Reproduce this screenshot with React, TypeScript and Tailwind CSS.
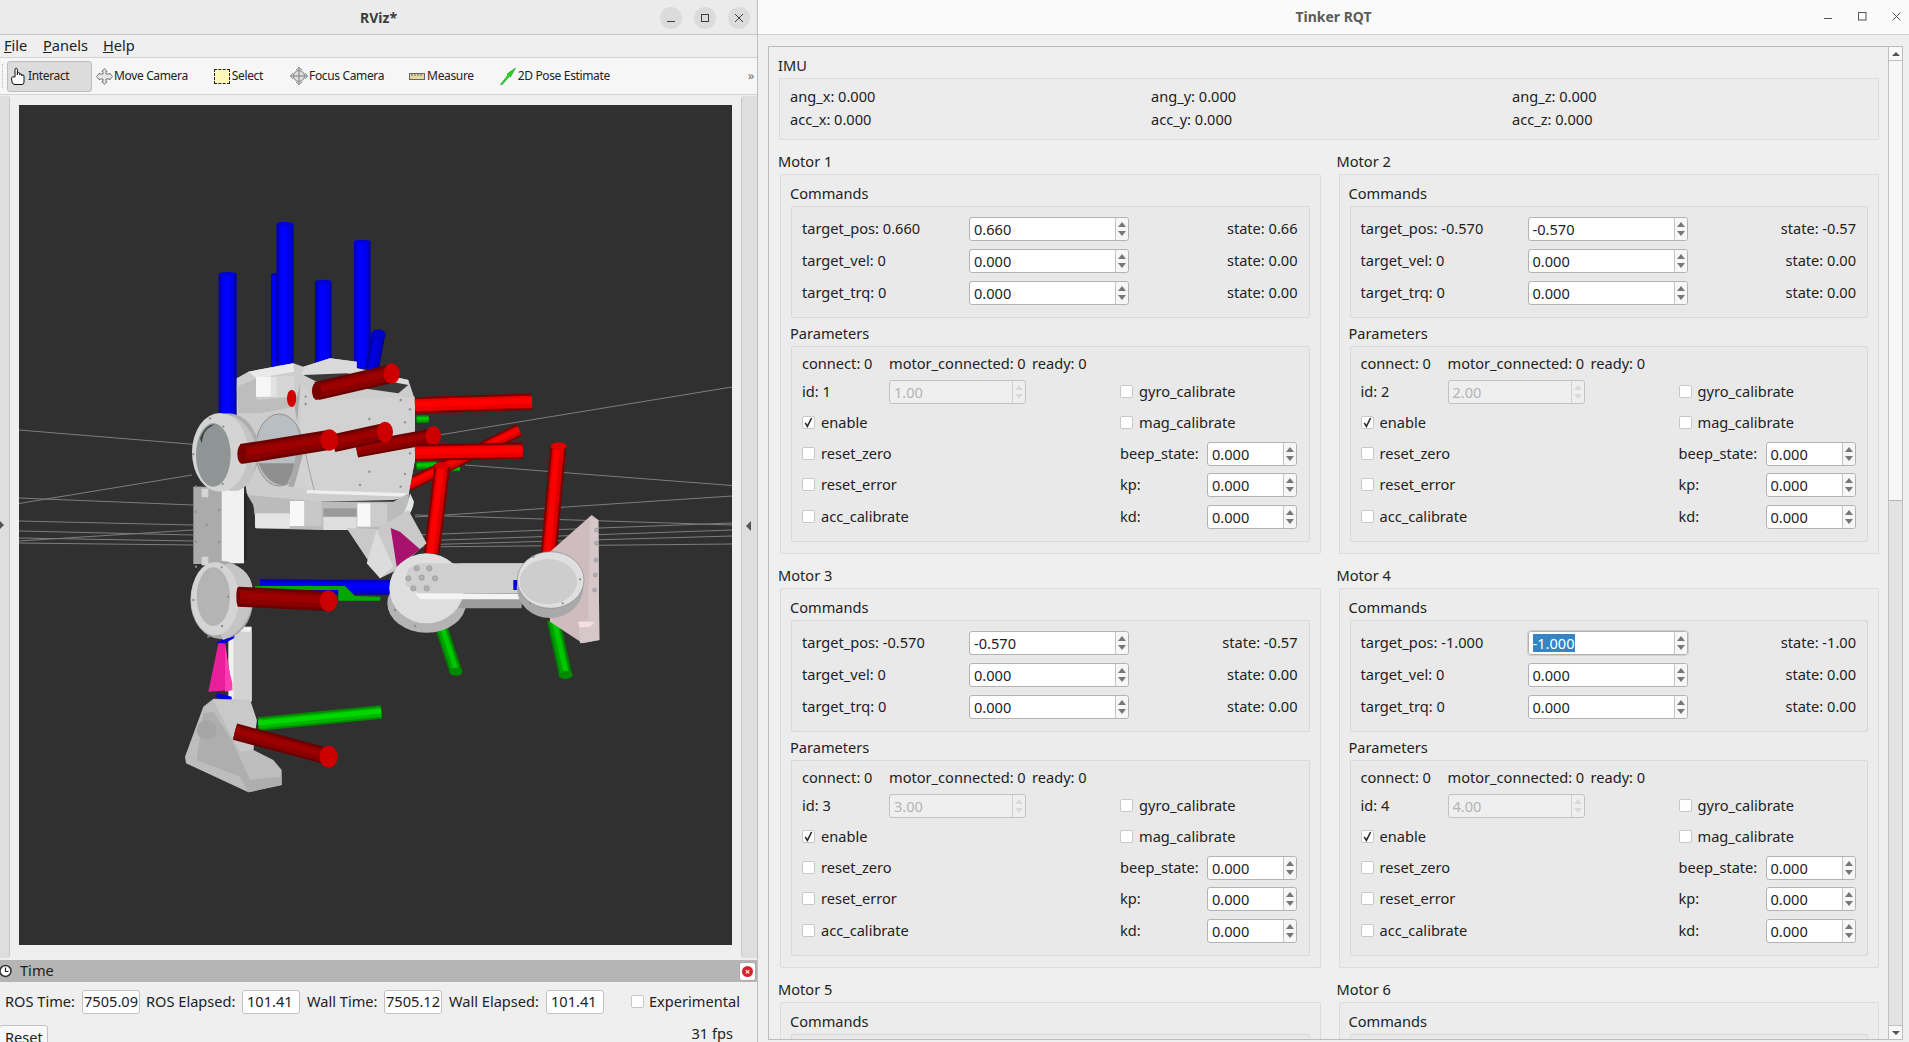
import React from "react";

const F = { fontFamily: '"Noto Sans", sans-serif' };

function Spin({ value, w, disabled, selected }: { value: string; w: string; disabled?: boolean; selected?: boolean }) {
  return (
    <div className={`${w} flex h-[24px] shrink-0 rounded-[3px] border ${disabled ? "border-[#c2c2c2] bg-[#efefef] text-[#b4b4b4]" : "border-[#b3b3b3] bg-white text-[#222]"} ${selected ? "outline outline-1 outline-[#cfcfcf]" : ""}`}>
      <div className="flex min-w-0 flex-1 items-center pl-[4px] leading-[18px]">
        {selected ? <span className="bg-[#3584c5] text-white">{value}</span> : <span>{value}</span>}
      </div>
      <div className={`flex w-[13px] shrink-0 flex-col items-center justify-center gap-[4px] border-l ${disabled ? "border-[#d2d2d2]" : "border-[#c4c4c4] bg-[#f6f6f6]"} rounded-r-[3px]`}>
        <div className={`h-0 w-0 border-x-[4px] border-b-[5px] border-x-transparent ${disabled ? "border-b-[#dadada]" : "border-b-[#777]"}`} />
        <div className={`h-0 w-0 border-x-[4px] border-t-[5px] border-x-transparent ${disabled ? "border-t-[#dadada]" : "border-t-[#777]"}`} />
      </div>
    </div>
  );
}

function Check({ label, checked }: { label: string; checked?: boolean }) {
  return (
    <div className="flex items-center">
      <div className="flex h-[13px] w-[13px] items-center justify-center rounded-[2px] border border-[#c8c8c8] bg-white">
        {checked && (
          <svg width="9" height="11" viewBox="0 0 9 11">
            <path d="M1.2 5.8 L3.4 9.4 L7.6 1" fill="none" stroke="#2a2a2a" strokeWidth="1.6" />
          </svg>
        )}
      </div>
      <span className="ml-[6px]">{label}</span>
    </div>
  );
}

function Motor({ n, pos, posLabel, state, focused }: { n: number; pos: string; posLabel: string; state: string; focused?: boolean }) {
  const cmds: [string, string, string, boolean][] = [
    [`target_pos: ${posLabel}`, pos, state, !!focused],
    ["target_vel: 0", "0.000", "0.00", false],
    ["target_trq: 0", "0.000", "0.00", false],
  ];
  const rowR = (l: string) => (
    <div className="flex items-center">
      <span className="w-[87px] shrink-0">{l}</span>
      <Spin value="0.000" w="w-[90px]" />
    </div>
  );
  return (
    <div>
      <div className="ml-[-1px] h-[34px] pt-[12px] leading-[18px]">{`Motor ${n}`}</div>
      <div className="ml-[1px] h-[380px] rounded-[2px] border border-[#dcdcdc] bg-[#ececec] px-[10px]">
        <div className="ml-[-1px] h-[31px] pt-[9px] leading-[18px]">Commands</div>
        <div className="h-[112px] rounded-[2px] border border-[#d9d9d9] bg-[#e9e9e9] px-[10px] pt-[6px]">
          {cmds.map(([l, v, s, f]) => (
            <div key={l} className="grid h-[32px] grid-cols-[167px_160px_1fr] items-center">
              <span>{l}</span>
              <Spin value={v} w="w-[160px]" selected={f} />
              <span className="pr-[1px] text-right">{`state: ${s}`}</span>
            </div>
          ))}
        </div>
        <div className="ml-[-1px] h-[28px] pt-[6px] leading-[18px]">Parameters</div>
        <div className="h-[196px] rounded-[2px] border border-[#d9d9d9] bg-[#e9e9e9] px-[10px] pt-[5px]">
          <div className="flex h-[24px] items-center">
            <span className="w-[87px]">connect: 0</span>
            <span className="w-[143px]">motor_connected: 0</span>
            <span>ready: 0</span>
          </div>
          <div className="grid h-[31px] grid-cols-[318px_1fr] items-center">
            <div className="flex items-center">
              <span className="w-[87px]">{`id: ${n}`}</span>
              <Spin value={`${n}.00`} w="w-[137px]" disabled />
            </div>
            <Check label="gyro_calibrate" />
          </div>
          <div className="grid h-[31px] grid-cols-[318px_1fr] items-center">
            <Check label="enable" checked />
            <Check label="mag_calibrate" />
          </div>
          <div className="grid h-[31px] grid-cols-[318px_1fr] items-center">
            <Check label="reset_zero" />
            {rowR("beep_state:")}
          </div>
          <div className="grid h-[32px] grid-cols-[318px_1fr] items-center">
            <Check label="reset_error" />
            {rowR("kp:")}
          </div>
          <div className="grid h-[32px] grid-cols-[318px_1fr] items-center">
            <Check label="acc_calibrate" />
            {rowR("kd:")}
          </div>
        </div>
      </div>
    </div>
  );
}

function Cyl({ a, b, w, c, cap, capR }: { a: [number, number]; b: [number, number]; w: number; c: [string, string, string]; cap?: string; capR?: [number, number] }) {
  const dx = b[0] - a[0];
  const dy = b[1] - a[1];
  const len = Math.hypot(dx, dy);
  const nx = -dy / len;
  const ny = dx / len;
  const L = (t: number, sw: number, col: string, k: string) => (
    <line key={k} x1={a[0] + nx * t} y1={a[1] + ny * t} x2={b[0] + nx * t} y2={b[1] + ny * t} stroke={col} strokeWidth={sw} />
  );
  return (
    <g>
      {L(0, w, c[0], "a")}
      {L(0, w * 0.72, c[1], "b")}
      {L(-w * 0.06, w * 0.36, c[2], "c")}
      {cap && capR && <ellipse cx={b[0]} cy={b[1]} rx={capR[0]} ry={capR[1]} fill={cap} />}
    </g>
  );
}

const BLUE: [string, string, string] = ["#0000b4", "#0000e6", "#0000ff"];
const RED: [string, string, string] = ["#7e0000", "#d80000", "#ff0000"];
const DRED: [string, string, string] = ["#6a0000", "#8a0000", "#9c0000"];
const GRN: [string, string, string] = ["#007a00", "#00a000", "#00c800"];

function Screws({ pts }: { pts: [number, number][] }) {
  return (
    <g fill="#8e8e8e">
      {pts.map(([x, y], i) => (
        <circle key={i} cx={x} cy={y} r="3.5" />
      ))}
    </g>
  );
}

function Robot() {
  const lines = [
    [19, 430, 214, 446], [19, 503.5, 192, 475], [19, 498, 193, 505], [19, 521, 193, 525], [19, 531, 193, 535],
    [19, 541, 193, 530], [19, 538, 193, 541], [19, 543, 193, 545], [732, 387, 433, 436], [732, 485.5, 465, 465],
    [732, 496, 415, 517], [415, 515, 732, 525], [415, 535, 732, 523], [415, 541, 732, 530], [415, 545, 732, 536], [415, 547, 732, 544],
  ];
  return (
    <svg className="block h-[840px] w-[713px]" viewBox="19 105 713 840">
      <rect x="19" y="105" width="713" height="840" fill="#303030" />
      {lines.map((l, i) => (
        <line key={i} x1={l[0]} y1={l[1]} x2={l[2]} y2={l[3]} stroke="#7d7d7d" strokeWidth="1" />
      ))}
      <g transform="translate(160 200) scale(0.33333)">
        <Cyl a={[342, 500]} b={[342, 224]} w={18} c={BLUE} />
        <ellipse cx="342" cy="224" rx="9" ry="4" fill="#0000b4" />
        <Cyl a={[203, 660]} b={[203, 222]} w={54} c={BLUE} />
        <ellipse cx="203" cy="222" rx="27" ry="6" fill="#0000d8" />
        <Cyl a={[375, 495]} b={[375, 72]} w={52} c={BLUE} />
        <ellipse cx="375" cy="72" rx="26" ry="6" fill="#0000d8" />
        <Cyl a={[490, 490]} b={[490, 245]} w={50} c={BLUE} />
        <ellipse cx="490" cy="245" rx="25" ry="6" fill="#0000d8" />
        <Cyl a={[607, 505]} b={[607, 125]} w={50} c={BLUE} />
        <ellipse cx="607" cy="125" rx="25" ry="6" fill="#0000d8" />
        <Cyl a={[636, 510]} b={[655, 405]} w={40} c={["#0000a0", "#0000c8", "#0000e0"]} />
        <ellipse cx="655" cy="405" rx="22" ry="17" fill="#0000c8" />

        <Cyl a={[770, 657]} b={[806, 657]} w={24} c={GRN} />
        <Cyl a={[770, 797]} b={[830, 795]} w={24} c={GRN} />
        <Cyl a={[850, 806]} b={[900, 806]} w={16} c={GRN} />
        <Cyl a={[745, 855]} b={[1078, 690]} w={38} c={RED} />
        <Cyl a={[815, 1060]} b={[847, 795]} w={48} c={RED} />
        <ellipse cx="846" cy="797" rx="23" ry="10" fill="#d80000" />
        <Cyl a={[1165, 1070]} b={[1195, 738]} w={48} c={RED} />
        <ellipse cx="1196" cy="738" rx="24" ry="11" fill="#e00000" />

        {/* rear of the torso */}
        <polygon points="230,535 265,515 400,490 430,500 510,475 590,485 590,505 745,540 765,600 765,780 750,860 745,890 700,900 480,905 480,965 290,980 280,910 260,880 230,640" fill="#cdcdcd" />
        <polygon points="265,515 400,490 402,515 290,535" fill="#e9e9e9" />
        <polygon points="430,500 510,475 590,485 590,505 745,540 742,560 425,525" fill="#dadada" />
        <polygon points="430,525 560,520 745,555 715,580 470,545" fill="#3a3a3a" />
        <ellipse cx="358" cy="750" rx="72" ry="108" fill="#b9bec2" stroke="#777" strokeWidth="2" />
        <path d="M295 790 Q325 860 380 855 L410 790 Z" fill="#8f8f8f" />
        <polygon points="230,560 290,535 290,600 400,590 400,620 300,640 260,640 235,640" fill="#bdbdbd" />
        <rect x="288" y="530" width="114" height="60" rx="8" fill="#e3e3e3" />
        <rect x="288" y="530" width="44" height="60" fill="#f6f6f6" />
        <rect x="350" y="530" width="52" height="60" fill="#d6d6d6" />
        <ellipse cx="395" cy="595" rx="14" ry="26" fill="#d00000" />

        {/* main plate */}
        <polygon points="422,548 465,600 765,590 765,780 750,855 745,885 465,870 402,860 422,760" fill="#d2d2d2" />
        <polygon points="422,548 410,680 430,760 402,860 385,860 420,720 404,620" fill="#a9a9a9" />
        <line x1="422" y1="700" x2="462" y2="870" stroke="#8a8a8a" strokeWidth="2" />
        <polygon points="440,870 745,880 745,890 440,880" fill="#efefef" />
        <Screws pts={[[437, 590], [437, 612], [628, 657], [722, 600], [750, 628], [735, 667], [628, 815], [600, 855], [722, 860], [750, 760], [735, 822]]} />

        {/* lower brackets */}
        <polygon points="262,885 480,905 700,905 745,880 750,930 690,985 480,990 290,985 280,915" fill="#bbb" />
        <rect x="285" y="940" width="105" height="45" rx="4" fill="#e4e4e4" />
        <rect x="390" y="903" width="44" height="75" fill="#f8f8f8" />
        <rect x="433" y="903" width="52" height="75" fill="#c8c8c8" />
        <rect x="490" y="950" width="100" height="40" rx="4" fill="#dedede" />
        <rect x="490" y="925" width="100" height="25" fill="#9a9a9a" />
        <rect x="592" y="910" width="40" height="70" fill="#f8f8f8" />
        <rect x="632" y="910" width="50" height="70" fill="#cccccc" />
        <path d="M690 985 Q740 950 750 880 L762 905 Q755 960 690 985 Z" fill="#e2e6e6" />

        {/* hip ring */}
        <rect x="100" y="860" width="84" height="232" fill="#ababab" />
        <rect x="184" y="862" width="68" height="228" fill="#f1f1f1" />
        <rect x="252" y="880" width="8" height="200" fill="#262626" />
        <rect x="125" y="866" width="20" height="26" fill="#d4d4d4" />
        <rect x="125" y="1070" width="20" height="26" fill="#d4d4d4" />
        <Screws pts={[[108, 935], [178, 930], [108, 1025], [178, 1025], [140, 975]]} />
        <ellipse cx="205" cy="755" rx="92" ry="115" fill="#aeaeae" />
        <path d="M225 650 Q290 690 290 770 Q285 850 235 872 L205 872 Q255 820 255 745 Q252 680 205 645 Z" fill="#c4c4c4" />
        <ellipse cx="180" cy="757" rx="84" ry="118" fill="#d4d4d4" />
        <ellipse cx="160" cy="765" rx="52" ry="95" fill="#8f9494" />
        <path d="M120 715 Q135 675 165 672 L150 682 Q130 690 125 730 Z" fill="#3d3d3d" />
        <Screws pts={[[150, 655], [190, 680], [207, 762], [188, 852], [108, 860], [100, 762]]} />

        <Cyl a={[245, 762]} b={[508, 720]} w={60} c={DRED} />
        <ellipse cx="246" cy="762" rx="14" ry="30" fill="#7a0000" />
        <Cyl a={[590, 750]} b={[820, 708]} w={46} c={DRED} cap="#cc0000" capR={[23, 30]} />
        <Cyl a={[520, 730]} b={[675, 696]} w={54} c={DRED} cap="#cc0000" capR={[24, 31]} />
        <ellipse cx="508" cy="720" rx="27" ry="32" fill="#cc0000" />
        <Cyl a={[470, 573]} b={[695, 521]} w={56} c={DRED} cap="#cc0000" capR={[24, 31]} />
        <ellipse cx="470" cy="573" rx="14" ry="27" fill="#7a0000" />
        <Cyl a={[765, 616]} b={[1116, 605]} w={50} c={["#7e0000", "#e80000", "#ff0000"]} />
        <Cyl a={[765, 758]} b={[1088, 752]} w={50} c={["#7e0000", "#e80000", "#ff0000"]} />
      </g>

      <g transform="translate(160 500) scale(0.33333)">
        {/* magenta cone and bracket */}
        <polygon points="560,85 655,85 745,30 800,130 700,215 660,235" fill="#c9c9c9" />
        <polygon points="650,90 620,190 660,235 700,200" fill="#dcdcdc" />
        <polygon points="692,84 720,95 780,148 710,200" fill="#a8126c" />
        <Cyl a={[300, 260]} b={[690, 262]} w={44} c={BLUE} />
        <polygon points="285,258 555,258 585,288 662,290 660,302 535,302 535,270 285,270" fill="#00a800" />

        {/* knee */}
        <rect x="205" y="380" width="70" height="225" fill="#f1f1f1" />
        <rect x="220" y="395" width="55" height="205" fill="#d3d3d3" />
        <polygon points="170,428 225,400 222,415 190,432" fill="#0000e0" />
        <polygon points="170,578 215,590 215,600 170,595" fill="#0000e0" />
        <polygon points="175,430 195,430 217,570 145,575" fill="#e91e9b" />
        <polygon points="195,430 205,500 217,550 217,570 195,575" fill="#ff3db0" />
        <ellipse cx="185" cy="300" rx="94" ry="118" fill="#a9a9a9" />
        <path d="M205 190 Q280 205 280 290 Q272 385 190 420 L180 400 Q225 340 215 280 Q212 230 185 200 Z" fill="#c5c5c5" />
        <ellipse cx="165" cy="296" rx="72" ry="110" fill="#d4d4d4" />
        <ellipse cx="160" cy="290" rx="50" ry="88" fill="#b4b4b4" />
        <Screws pts={[[185, 202], [204, 290], [186, 378], [145, 410], [108, 200], [100, 300]]} />
        <Cyl a={[235, 290]} b={[506, 303]} w={60} c={DRED} cap="#cc0000" capR={[26, 32]} />
        <ellipse cx="235" cy="290" rx="6" ry="30" fill="#7a0000" />

        {/* foot */}
        <polygon points="130,620 160,596 270,600 290,660 280,750 340,780 365,810 365,855 265,877 78,790 75,770" fill="#bdbdbd" />
        <polygon points="160,600 270,600 290,660 280,750 240,755 200,680" fill="#c9c9c9" />
        <polygon points="160,635 215,720 270,840 365,830 365,855 265,877 240,830 110,780 130,640" fill="#aeaeae" />
        <Cyl a={[295, 672]} b={[664, 636]} w={40} c={["#008a00", "#00b400", "#00d800"]} />
        <circle cx="140" cy="690" r="30" fill="#a6a6a6" />
        <Cyl a={[225, 695]} b={[506, 770]} w={50} c={DRED} cap="#cc0000" capR={[27, 33]} />

        {/* right leg */}
        <Cyl a={[845, 385]} b={[888, 515]} w={38} c={GRN} />
        <ellipse cx="888" cy="515" rx="19" ry="12" fill="#008a00" />
        <Cyl a={[1180, 360]} b={[1217, 525]} w={40} c={GRN} />
        <ellipse cx="1217" cy="525" rx="21" ry="12" fill="#008a00" />

        <polygon points="1165,160 1295,45 1315,60 1318,420 1268,430 1170,365" fill="#cfbcbf" />
        <polygon points="1290,50 1315,60 1318,420 1260,430 1255,365 1285,360" fill="#d6c7ca" />
        <polygon points="1255,365 1305,365 1290,380 1260,382" fill="#f5dfe2" />
        <ellipse cx="800" cy="310" rx="118" ry="88" fill="#b4b4b4" />
        <polygon points="900,190 1090,190 1085,325 880,325" fill="#9d9d9d" />
        <ellipse cx="800" cy="265" rx="112" ry="105" fill="#dedede" />
        <polygon points="745,205 775,190 1095,190 1085,280 780,280 735,255" fill="#cfcfcf" />
        <polygon points="765,280 1080,282 1080,298 780,298" fill="#f4f4f4" />
        <rect x="1060" y="240" width="22" height="30" fill="#0000e0" />
        <ellipse cx="1170" cy="262" rx="100" ry="92" fill="#a9a9a9" />
        <ellipse cx="1172" cy="240" rx="100" ry="85" fill="#dfdfdf" stroke="#8a8a8a" strokeWidth="2" />
        <ellipse cx="1165" cy="245" rx="86" ry="68" fill="#cdcdcd" />
        <g fill="#b0b0b0" stroke="#8a8a8a" strokeWidth="1.5">
          {[[770, 205], [808, 205], [745, 235], [785, 233], [825, 235], [760, 265], [800, 265]].map(([x, y], i) => (
            <circle key={i} cx={x} cy={y} r="8" />
          ))}
          {[[1310, 90], [1310, 130], [1308, 180], [1306, 225], [1304, 270]].map(([x, y], i) => (
            <circle key={i} cx={x} cy={y} r="6" />
          ))}
        </g>
        <Screws pts={[[1120, 170], [1260, 238], [1208, 310], [1110, 310], [765, 378], [705, 330]]} />
      </g>
    </svg>
  );
}

function ToolBtn({ icon, label, cls }: { icon: React.ReactNode; label: string; cls: string }) {
  return (
    <div className={`flex items-center ${cls}`}>
      {icon}
      <span>{label}</span>
    </div>
  );
}

function TimeField({ label, value, lw, align }: { label: string; value: string; lw: string; align?: string }) {
  return (
    <div className="flex items-center">
      <span className={`${lw} whitespace-nowrap`}>{label}</span>
      <div className={`flex h-[24px] w-[58px] items-center rounded-[3px] border border-[#c2c2c2] bg-white ${align ?? "pl-[1px]"}`}>{value}</div>
    </div>
  );
}

export default function App() {
  return (
    <div className="flex h-[1042px] w-[1909px] overflow-hidden bg-[#efefef] text-[14.6px] text-[#222]" style={F}>
      {/* RViz window */}
      <div className="flex h-full w-[758px] shrink-0 flex-col border-r border-[#bdbdbd]">
        <div className="relative flex h-[35px] shrink-0 items-center justify-center border-b border-[#c8c8c8] bg-[#ebebeb] text-[14px] font-bold text-[#3d3d3d]">
          RViz*
          <div className="absolute right-[7px] top-[7px] flex gap-[12px]">
            {["min", "max", "close"].map((k) => (
              <div key={k} className="flex h-[22px] w-[22px] items-center justify-center rounded-full bg-[#dbdbdb]">
                <svg width="10" height="10" viewBox="0 0 10 10" fill="none" stroke="#3d3d3d" strokeWidth="1">
                  {k === "min" && <path d="M1 8.5 H9" />}
                  {k === "max" && <rect x="1.5" y="1.5" width="7" height="7" />}
                  {k === "close" && <path d="M1 1 L9 9 M9 1 L1 9" />}
                </svg>
              </div>
            ))}
          </div>
        </div>
        <div className="flex h-[22px] shrink-0 items-center bg-[#efefef] pl-[4px]">
          <span className="w-[39px]"><u>F</u>ile</span>
          <span className="w-[60px]"><u>P</u>anels</span>
          <span><u>H</u>elp</span>
        </div>
        <div className="relative flex h-[38px] shrink-0 items-center border-y border-[#d2d2d2] bg-[#f6f6f6] text-[12px] tracking-[-0.35px]">
          <div className="ml-[2px] h-[24px] w-[2px] border-l border-dotted border-[#bbb]" />
          <ToolBtn
            cls="ml-[3px] h-[31px] w-[85px] rounded-[3px] border border-[#bdbdbd] bg-[#dcdcdc] pl-[2px]"
            label="Interact"
            icon={
              <svg width="18" height="19" viewBox="0 0 18 19" fill="#fff" stroke="#111" strokeWidth="1">
                <path d="M5 10 V2.5 a1.2 1.2 0 0 1 2.4 0 V8 V6.5 a1.1 1.1 0 0 1 2.2 0 V8 a1.1 1.1 0 0 1 2.2 0 V9 a1.1 1.1 0 0 1 2.2 0 V15 Q14 17.5 12 17.5 H5 Q2.5 17.5 2 15 L1.5 11 Q2 9 5 10 Z" />
              </svg>
            }
          />
          <ToolBtn
            cls="ml-[4px]"
            label="Move Camera"
            icon={
              <svg className="mr-[1px]" width="17" height="17" viewBox="0 0 17 17" fill="#e6e6e6" stroke="#777" strokeWidth="1">
                <path d="M8.5 .5 L11 3.5 H10 V6 H13.5 V5 L16.5 8.5 L13.5 12 V11 H10 V13.5 H11 L8.5 16.5 L6 13.5 H7 V11 H3.5 V12 L.5 8.5 L3.5 5 V6 H7 V3.5 H6 Z" />
              </svg>
            }
          />
          <ToolBtn
            cls="ml-[26px]"
            label="Select"
            icon={<div className="mr-[2px] h-[15px] w-[16px] border border-dashed border-[#222] bg-[#fbf8b8]" />}
          />
          <ToolBtn
            cls="ml-[27px]"
            label="Focus Camera"
            icon={
              <svg className="mr-[1px]" width="18" height="18" viewBox="0 0 18 18" fill="none" stroke="#808080" strokeWidth="1">
                <circle cx="9" cy="9" r="5.5" fill="#dedede" />
                <path d="M9 .5 V17.5 M.5 9 H17.5 M6 3 L9 .5 L12 3 M6 15 L9 17.5 L12 15 M3 6 L.5 9 L3 12 M15 6 L17.5 9 L15 12" />
              </svg>
            }
          />
          <ToolBtn
            cls="ml-[25px]"
            label="Measure"
            icon={
              <svg className="mr-[2px]" width="16" height="7" viewBox="0 0 16 7">
                <rect x=".5" y=".5" width="15" height="6" fill="#e4d9a0" stroke="#666" />
                <path d="M3 1 V3 M6 1 V3 M9 1 V3 M12 1 V3" stroke="#666" />
              </svg>
            }
          />
          <ToolBtn
            cls="ml-[25px]"
            label="2D Pose Estimate"
            icon={
              <svg className="mr-[1px]" width="18" height="18" viewBox="0 0 18 18">
                <path d="M1.5 17.5 L9 8 L8 7 L16.5 1 L11.5 10 L10.5 9.2 L3 17.8 Z" fill="#1fd61f" stroke="#0e8a0e" strokeWidth=".5" />
              </svg>
            }
          />
          <span className="absolute right-[3px] text-[13px] text-[#777]">»</span>
        </div>
        <div className="flex min-h-0 flex-1 pt-[10px]">
          <div className="relative mt-[-9px] h-[862px] w-[10px] shrink-0 rounded-r-[4px] border-r border-[#c8c8c8] bg-[#dedede]">
            <div className="absolute left-0 top-[425px] h-0 w-0 border-y-[4px] border-l-[4px] border-y-transparent border-l-[#555]" />
          </div>
          <div className="ml-[9px] h-[840px] w-[713px] shrink-0">
            <Robot />
          </div>
          <div className="relative ml-[9px] mt-[-9px] h-[862px] w-[16px] shrink-0 rounded-l-[4px] border-l border-[#c8c8c8] bg-[#dedede]">
            <div className="absolute left-[4px] top-[425px] h-0 w-0 border-y-[5px] border-r-[5px] border-y-transparent border-r-[#555]" />
          </div>
        </div>
        <div className="flex h-[82px] shrink-0 flex-col">
          <div className="flex h-[22px] shrink-0 items-center bg-[#b5b5b5]">
            <svg className="ml-[-1px]" width="14" height="14" viewBox="0 0 14 14">
              <circle cx="6.5" cy="7" r="5.5" fill="#fff" stroke="#333" strokeWidth="1.5" />
              <path d="M6.5 3.5 V7.5 H9.5" fill="none" stroke="#222" strokeWidth="1.2" />
            </svg>
            <span className="ml-[7px]">Time</span>
            <div className="ml-auto mr-[1px] flex h-[19px] w-[17px] items-center justify-center rounded-[3px] border border-[#aaa] bg-white">
              <div className="flex h-[11px] w-[11px] items-center justify-center rounded-full bg-[#d8232a] text-[9px] font-bold leading-none text-white">×</div>
            </div>
          </div>
          <div className="flex h-[39px] shrink-0 items-center pl-[5px]">
            <TimeField label="ROS Time:" value="7505.09" lw="w-[77px]" />
            <div className="ml-[6px]"><TimeField label="ROS Elapsed:" value="101.41" lw="w-[96px]" align="pl-[4px]" /></div>
            <div className="ml-[7px]"><TimeField label="Wall Time:" value="7505.12" lw="w-[77px]" /></div>
            <div className="ml-[7px]"><TimeField label="Wall Elapsed:" value="101.41" lw="w-[97px]" align="pl-[4px]" /></div>
            <div className="ml-[27px] flex items-center">
              <div className="h-[13px] w-[13px] rounded-[2px] border border-[#c8c8c8] bg-white" />
              <span className="ml-[5px]">Experimental</span>
            </div>
          </div>
          <div className="flex items-start">
            <div className="ml-[-1px] mt-[4px] h-[30px] w-[49px] rounded-[3px] border border-[#c2c2c2] bg-[#f8f8f8] pl-[5px] pt-[1px]">Reset</div>
            <span className="ml-auto mr-[24px] mt-[2px]">31 fps</span>
          </div>
        </div>
      </div>

      {/* RQT window */}
      <div className="flex h-full min-w-0 flex-1 flex-col">
        <div className="relative flex h-[35px] shrink-0 items-center justify-center border-b border-[#d2d2d2] bg-[#fafafa] pb-[1px] text-[14px] font-bold text-[#5c5c5c]">
          Tinker RQT
          <div className="absolute right-[8px] top-[12px] flex gap-[25px]">
            <svg width="9" height="9" viewBox="0 0 9 9" fill="none" stroke="#555" strokeWidth="1"><path d="M0 6.5 H8" /></svg>
            <svg width="9" height="9" viewBox="0 0 9 9" fill="none" stroke="#555" strokeWidth="1"><rect x=".5" y=".5" width="7.5" height="7.5" /></svg>
            <svg width="9" height="9" viewBox="0 0 9 9" fill="none" stroke="#555" strokeWidth="1"><path d="M.5 .5 L8.5 8.5 M8.5 .5 L.5 8.5" /></svg>
          </div>
        </div>
        <div className="min-h-0 flex-1 pl-[10px] pr-[6px] pt-[11px]">
          <div className="flex h-[994px] border border-[#bcbcbc]">
            <div className="min-w-0 flex-1 overflow-hidden pl-[10px] pr-[9px] pt-[9px]">
              <div className="mb-[4px] ml-[-1px] leading-[18px]">IMU</div>
              <div className="grid h-[62px] grid-cols-[361px_361px_1fr] grid-rows-[23px_23px] content-start rounded-[2px] border border-[#dcdcdc] bg-[#ececec] px-[10px] pt-[6px] leading-[22px]">
                <span>ang_x: 0.000</span>
                <span>ang_y: 0.000</span>
                <span>ang_z: 0.000</span>
                <span>acc_x: 0.000</span>
                <span>acc_y: 0.000</span>
                <span>acc_z: 0.000</span>
              </div>
              <div className="grid grid-cols-2 gap-x-[17px]">
                <Motor n={1} pos="0.660" posLabel="0.660" state="0.66" />
                <Motor n={2} pos="-0.570" posLabel="-0.570" state="-0.57" />
                <Motor n={3} pos="-0.570" posLabel="-0.570" state="-0.57" />
                <Motor n={4} pos="-1.000" posLabel="-1.000" state="-1.00" focused />
                <Motor n={5} pos="0.000" posLabel="0.000" state="0.00" />
                <Motor n={6} pos="0.000" posLabel="0.000" state="0.00" />
              </div>
            </div>
            <div className="flex w-[14px] shrink-0 flex-col border-l border-[#c0c0c0] bg-[#e3e3e3]">
              <div className="flex h-[14px] shrink-0 items-center justify-center border-b border-[#c0c0c0] bg-[#f8f8f8]">
                <div className="h-0 w-0 border-x-[4px] border-b-[4px] border-x-transparent border-b-[#555]" />
              </div>
              <div className="h-[440px] shrink-0 border-b border-[#b5b5b5] bg-[#f7f7f7]" />
              <div className="flex-1" />
              <div className="flex h-[14px] shrink-0 items-center justify-center border-t border-[#c0c0c0] bg-[#f8f8f8]">
                <div className="h-0 w-0 border-x-[4px] border-t-[4px] border-x-transparent border-t-[#555]" />
              </div>
            </div>
          </div>
        </div>
      </div>
    </div>
  );
}
